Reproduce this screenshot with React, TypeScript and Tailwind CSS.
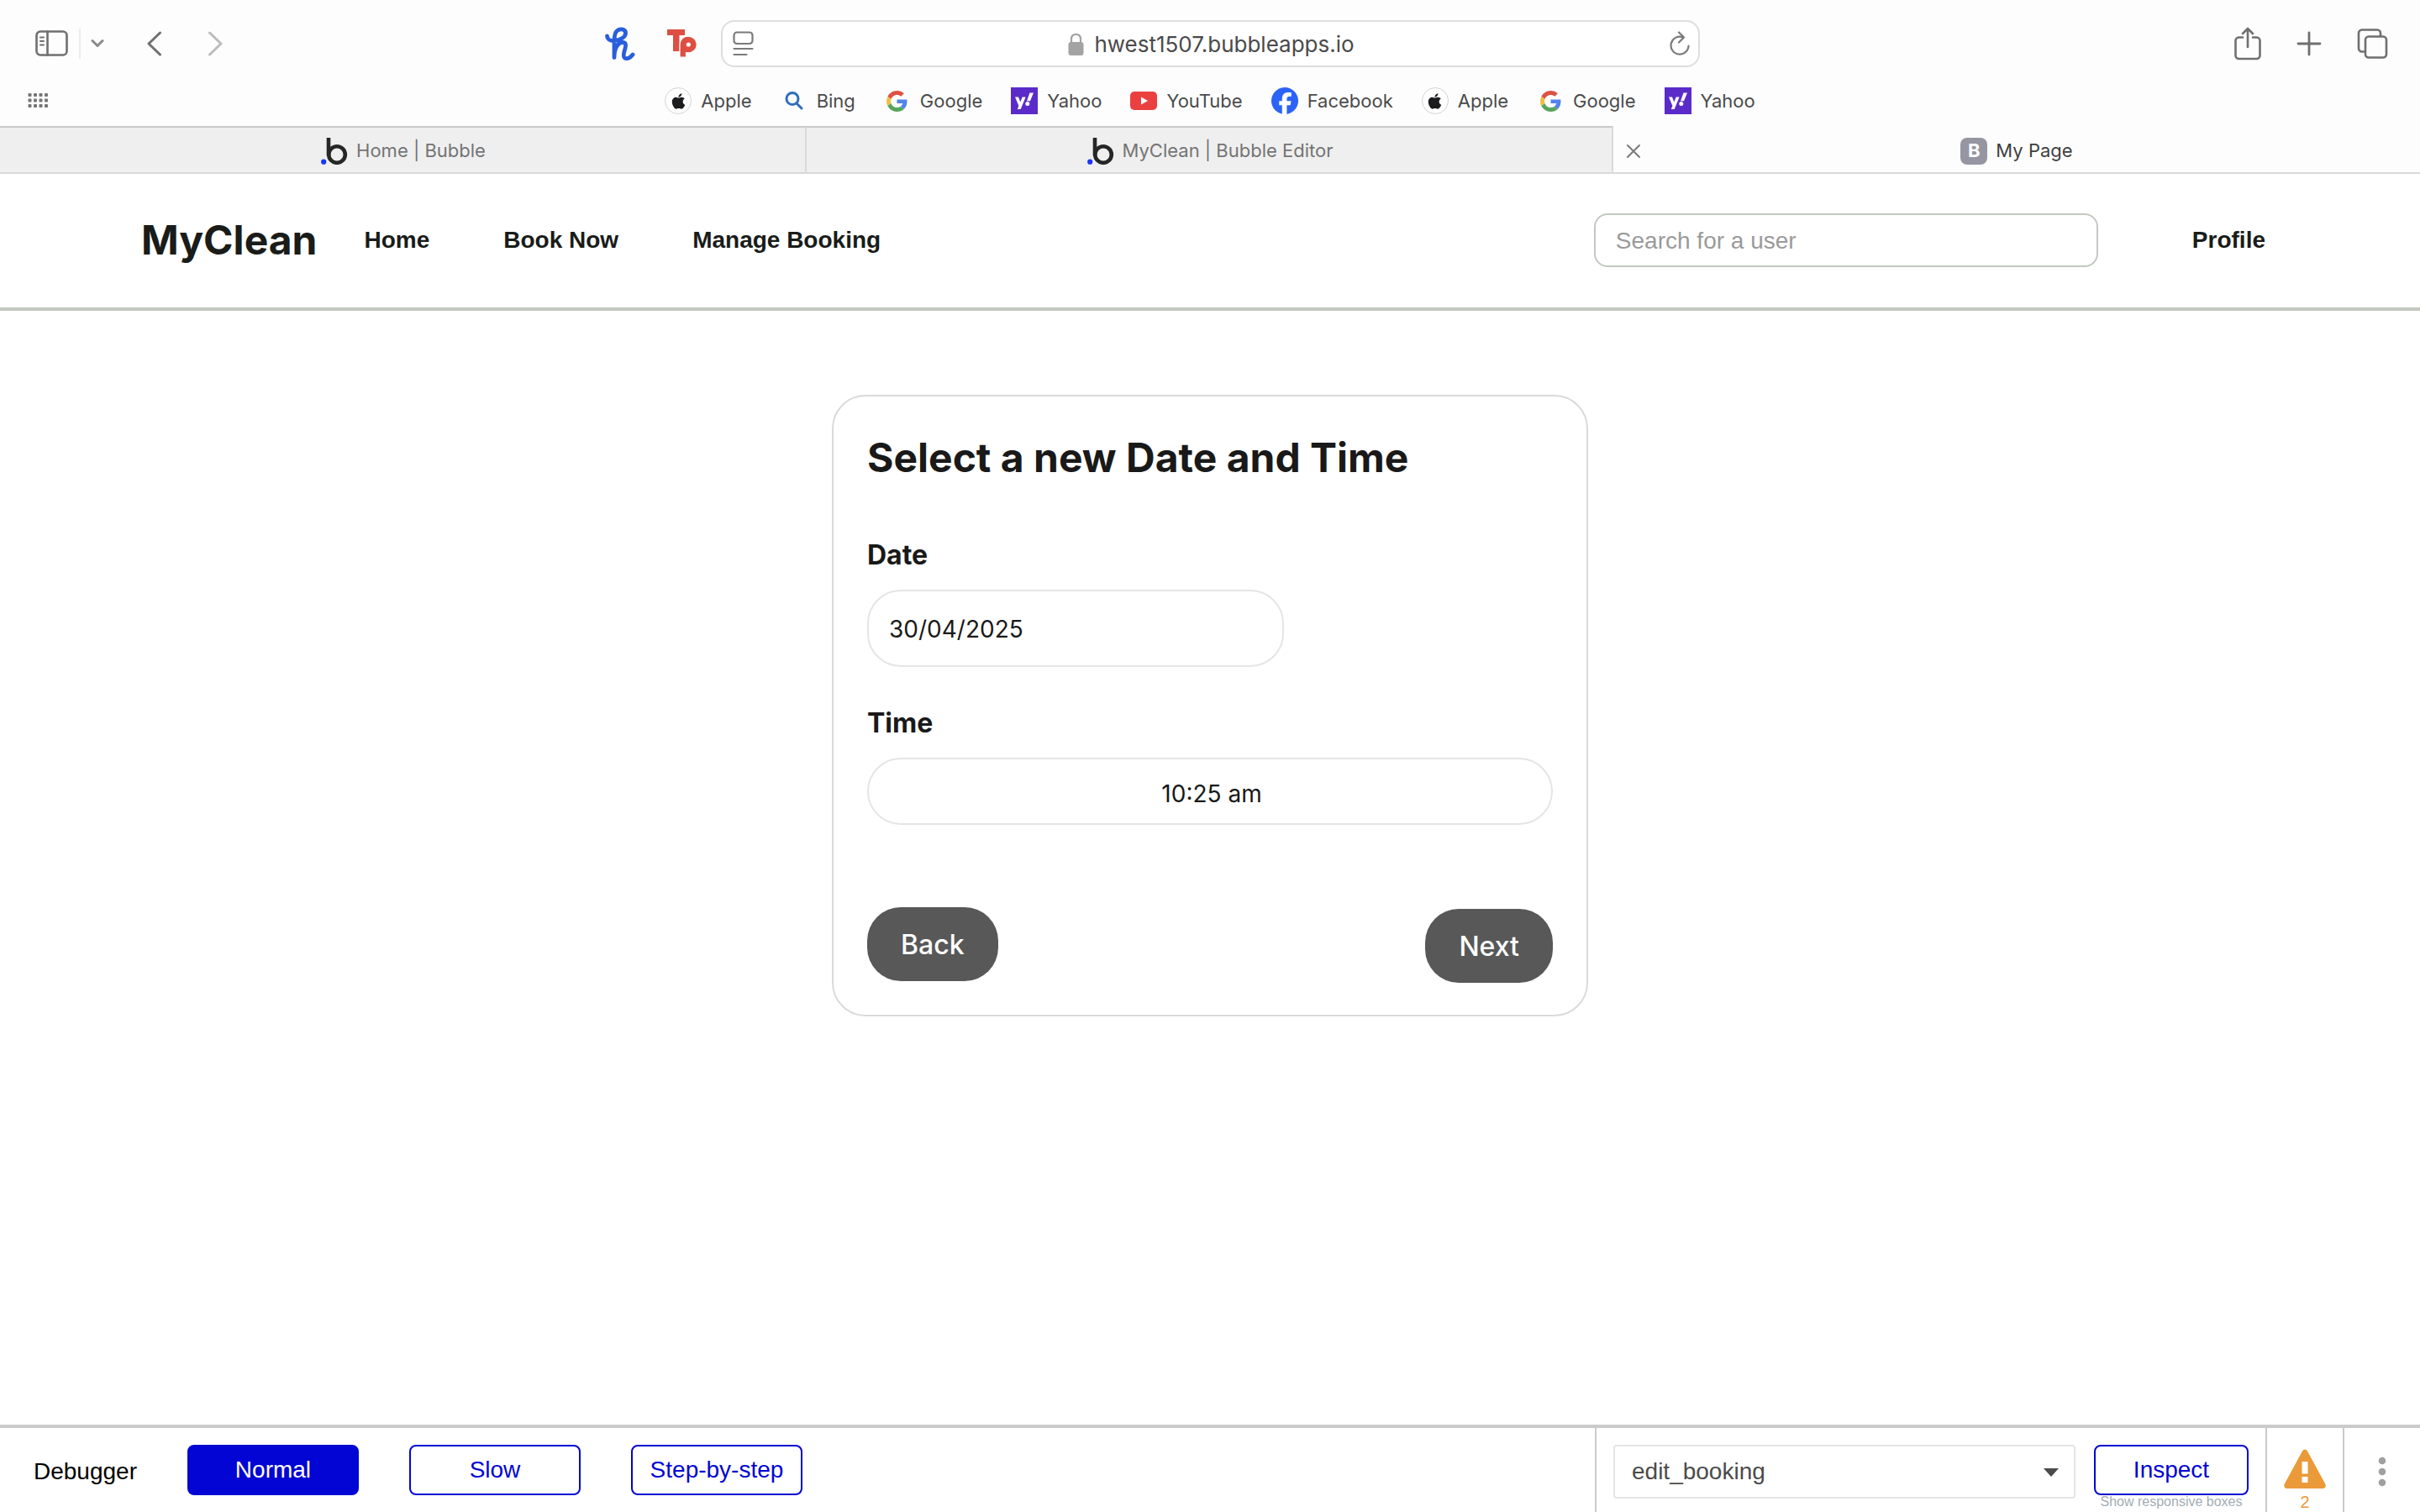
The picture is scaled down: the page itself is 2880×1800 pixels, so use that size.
import React from "react";
import { FaApple } from "react-icons/fa";

const inter = "font-['Inter',sans-serif]";
const helv = "font-['Liberation_Sans',Arial,sans-serif]";

function SidebarIcon() {
  return (
    <svg width="40" height="32" viewBox="0 0 40 32" fill="none" stroke="#6f6f6f" strokeWidth="2.6" strokeLinecap="round">
      <rect x="1.5" y="1.5" width="36" height="28" rx="4.5" />
      <path d="M14.5 1.5v28" />
      <path d="M6 8.500h4M6 13h4M6 17.500h4" strokeWidth="2" />
    </svg>
  );
}

function AppleBadge() {
  return (
    <span className="flex size-8 items-center justify-center rounded-full border border-[#d4d4d4] bg-white">
      <FaApple size={21} color="#1c1c1e" />
    </span>
  );
}

function BingIcon() {
  return (
    <svg width="22" height="22" viewBox="0 0 22 22" fill="none" stroke="#2f6dbd" strokeWidth="3" strokeLinecap="round">
      <circle cx="9" cy="8.500" r="7" />
      <path d="M14 14l6 6" />
    </svg>
  );
}

function GoogleIcon() {
  return (
    <svg width="25" height="25" viewBox="0 0 48 48">
      <path fill="#DE5145" d="M24 9.500c3.540 0 6.710 1.220 9.210 3.600l6.850-6.850C35.900 2.380 30.470 0 24 0 14.620 0 6.510 5.380 2.560 13.220l7.980 6.190C12.430 13.720 17.740 9.500 24 9.500z" />
      <path fill="#5383EC" d="M46.980 24.550c0-1.570-.15-3.090-.38-4.550H24v9.020h12.940c-.58 2.960-2.260 5.480-4.780 7.180l7.730 6c4.510-4.180 7.090-10.360 7.090-17.650z" />
      <path fill="#F1BE42" d="M10.530 28.590c-.48-1.450-.76-2.990-.76-4.590s.27-3.140.76-4.590l-7.980-6.190C.92 16.460 0 20.120 0 24c0 3.880.92 7.540 2.560 10.780l7.970-6.190z" />
      <path fill="#58A55C" d="M24 48c6.480 0 11.930-2.130 15.890-5.810l-7.730-6c-2.150 1.450-4.920 2.300-8.160 2.300-6.260 0-11.570-4.220-13.470-9.910l-7.980 6.190C6.510 42.620 14.620 48 24 48z" />
    </svg>
  );
}

function YahooIcon() {
  return (
    <svg width="32" height="32" viewBox="0 0 32 32">
      <path fill="#5a2bc9" d="M0 0h32v32H0z" />
      <path fill="#fff" d="M5 11.500h4l2.300 6 2.300-6h4L11.700 26H7.800l1.600-3.900zM22.500 6.500H27l-4 9.800h-4z" />
      <circle cx="19.800" cy="19.600" r="2.500" fill="#fff" />
    </svg>
  );
}

function YouTubeIcon() {
  return (
    <svg width="32" height="22" viewBox="0 0 32 22">
      <rect width="32" height="22" rx="5" fill="#ea4140" />
      <path fill="#fff" d="M13 6.500v9l8-4.500z" />
    </svg>
  );
}

function FacebookIcon() {
  return (
    <svg width="32" height="32" viewBox="0 0 32 32">
      <circle cx="16" cy="16" r="16" fill="#2b63f6" />
      <path fill="#fff" d="M12.800 32V21.200H9.300v-5h3.500v-2.400c0-5.400 2.500-7.900 7.700-7.900 1 0 2.600.2 3.300.4v4.500c-.4 0-1-.1-1.800-.1-2.600 0-3.600 1-3.600 3.500v2h5.100l-.9 5h-4.200V32z" />
    </svg>
  );
}

function BubbleIcon() {
  return (
    <svg width="32" height="32" viewBox="0 0 32 32" fill="none">
      <path d="M9 0v21" stroke="#262626" strokeWidth="4.600" />
      <circle cx="19" cy="20" r="9.800" stroke="#262626" strokeWidth="4.600" />
      <circle cx="3.200" cy="28.700" r="3.100" fill="#1a33ff" />
    </svg>
  );
}

const bookmarks: { label: string; icon: React.ReactNode }[] = [
  { label: "Apple", icon: <AppleBadge /> },
  { label: "Bing", icon: <BingIcon /> },
  { label: "Google", icon: <GoogleIcon /> },
  { label: "Yahoo", icon: <YahooIcon /> },
  { label: "YouTube", icon: <YouTubeIcon /> },
  { label: "Facebook", icon: <FacebookIcon /> },
  { label: "Apple", icon: <AppleBadge /> },
  { label: "Google", icon: <GoogleIcon /> },
  { label: "Yahoo", icon: <YahooIcon /> },
];

function Toolbar() {
  return (
    <div className="grid h-[104px] grid-cols-[1fr_1165px_1fr] items-center">
      <div className="flex items-center justify-between pr-7 pl-[42px]">
        <div className="flex items-center">
          <button aria-label="Toggle sidebar"><SidebarIcon /></button>
          <span className="ml-3 h-9 w-0.5 bg-[#ececec]" />
          <button aria-label="Tab groups" className="ml-3">
            <svg width="16" height="12" viewBox="0 0 16 12" fill="none" stroke="#8a8a8a" strokeWidth="3" strokeLinecap="round" strokeLinejoin="round"><path d="M2 2.500l6 6 6-6" /></svg>
          </button>
          <button aria-label="Back" className="ml-[50px]">
            <svg width="20" height="30" viewBox="0 0 20 30" fill="none" stroke="#6f6f6f" strokeWidth="3" strokeLinecap="round" strokeLinejoin="round"><path d="M16.500 2L3 15l13.500 13" /></svg>
          </button>
          <button aria-label="Forward" className="ml-[52px]">
            <svg width="20" height="30" viewBox="0 0 20 30" fill="none" stroke="#bcbcbc" strokeWidth="3" strokeLinecap="round" strokeLinejoin="round"><path d="M3.500 2L17 15 3.500 28" /></svg>
          </button>
        </div>
        <div className="flex items-center gap-[38px]">
          <button aria-label="Honey">
            <svg width="36" height="40" viewBox="0 -1 36 40" fill="none" stroke="#2a5fdc" strokeWidth="4.800" strokeLinecap="round" strokeLinejoin="round">
              <path d="M2.500 10C3 14 7 16 11 15.500 18 15 24.500 11 24.500 6.500 24.500 1 17 .5 13.500 4.500 11 7.500 11 12 11 17v18.500C11 25 15 17.500 21 17.500c4 0 4 3 3 7s-3 8.500-1 11c2.500 2.500 7 .5 10-3.500" />
            </svg>
          </button>
          <button aria-label="Tp">
            <svg width="36" height="36" viewBox="0 0 36 36">
              <path fill="#de4e43" d="M0 1h21v7h-6.500v19H7V8H0z" />
              <path fill="#de4e43" stroke="#fdfdfd" strokeWidth="1.200" d="M15 34V19c0-6 4.500-9.800 10-9.800 5.800 0 10.300 4.400 10.300 9.800s-4.500 9.800-10.300 9.800c-.8 0-1.600-.1-2.500-.3V34z" />
              <circle cx="25.300" cy="19" r="2.600" fill="#fdfdfd" />
            </svg>
          </button>
        </div>
      </div>
      <div className="flex h-14 items-center justify-between rounded-2xl border-2 border-[#dedede] bg-white pr-2.5 pl-3">
        <button aria-label="Page menu">
          <svg width="25" height="30" viewBox="0 0 25 30" fill="none" stroke="#7a7a7a" strokeWidth="2.200" strokeLinecap="round"><rect x="1.500" y="1.500" width="22" height="13.500" rx="3.500" /><path d="M1.500 21h22M1.500 28h15" /></svg>
        </button>
        <div className="flex items-center gap-3 pt-0.5 text-[26px] leading-8 text-[#4a4a4a]">
          <svg width="19" height="28" viewBox="0 0 19 28"><path d="M4 13V7.500C4 3.800 6 1.800 9.500 1.800S15 3.800 15 7.500V13" fill="none" stroke="#a3a3a3" strokeWidth="2.200" /><rect x="0.500" y="11" width="18" height="16" rx="3" fill="#a3a3a3" /></svg>
          <span>hwest1507.bubbleapps.io</span>
        </div>
        <button aria-label="Reload">
          <svg width="24" height="30" viewBox="0 0 24 30" fill="none" stroke="#7a7a7a" strokeWidth="2.200" strokeLinecap="round" strokeLinejoin="round"><path d="M22.500 17.500A10.500 10.500 0 1 1 15.500 7.200M11 1.500l6 6-6 6" /></svg>
        </button>
      </div>
      <div className="flex items-center justify-end gap-[42px] pr-[38px]">
        <button aria-label="Share">
          <svg width="32" height="40" viewBox="0 0 32 40" fill="none" stroke="#6f6f6f" strokeWidth="2.600" strokeLinecap="round" strokeLinejoin="round"><path d="M10 12.500H5.500a4 4 0 0 0-4 4V34a4 4 0 0 0 4 4h21a4 4 0 0 0 4-4V16.500a4 4 0 0 0-4-4H22M16 24V2M10 8l6-6 6 6" /></svg>
        </button>
        <button aria-label="New tab">
          <svg width="30" height="30" viewBox="0 0 30 30" fill="none" stroke="#6f6f6f" strokeWidth="2.800" strokeLinecap="round"><path d="M15 2v26M2 15h26" /></svg>
        </button>
        <button aria-label="Tab overview">
          <svg width="37" height="36" viewBox="0 0 37 36" fill="none" stroke="#6f6f6f" strokeWidth="2.600" strokeLinejoin="round"><rect x="10" y="9.500" width="25" height="25" rx="4" /><path d="M10 27.500H6a4 4 0 0 1-4-4v-18a4 4 0 0 1 4-4h18a4 4 0 0 1 4 4v4" /></svg>
        </button>
      </div>
    </div>
  );
}

function BookmarksBar() {
  return (
    <div className="grid h-[46px] grid-cols-[1fr_auto_1fr] items-start">
      <button aria-label="Show all bookmarks" className="ml-[33px] flex h-8 items-center justify-self-start">
        <svg width="26" height="18" viewBox="0 0 26 18" fill="#767676">
          {[0, 6.500, 13, 19.500].map((x) => [0, 6.500, 13].map((y) => <rect key={`${x}-${y}`} x={x + 0.500} y={y} width="4" height="4" rx="1" />))}
        </svg>
      </button>
      <nav aria-label="Bookmarks" className="flex items-center gap-[34px] text-[22px] leading-8 text-[#4a4a4a]">
        {bookmarks.map((b, i) => (
          <a key={i} href="#" className="flex h-8 items-center gap-[11px]">
            <span className="flex w-8 justify-center">{b.icon}</span>
            <span>{b.label}</span>
          </a>
        ))}
      </nav>
      <span />
    </div>
  );
}

function TabBar() {
  return (
    <div className="grid h-[57px] grid-cols-3 border-b-2 border-[#dadada] text-[22px] text-[#747474]">
      <button className="flex items-center justify-center gap-2.5 border-t-2 border-r-2 border-t-[#c9c9c9] border-r-[#dadada] bg-[#efefef] pt-0.5 pl-0.5">
        <BubbleIcon />
        <span>Home | Bubble</span>
      </button>
      <button className="flex items-center justify-center gap-2.5 border-t-2 border-r-2 border-t-[#c9c9c9] border-r-[#dadada] bg-[#efefef] pt-0.5 pl-0.5">
        <BubbleIcon />
        <span>MyClean | Bubble Editor</span>
      </button>
      <div className="grid grid-cols-[48px_1fr_48px] items-center pt-1">
        <button aria-label="Close tab" className="justify-self-center">
          <svg width="18" height="18" viewBox="0 0 18 18" fill="none" stroke="#7a7a7a" strokeWidth="2" strokeLinecap="round"><path d="M2 2l14 14M16 2L2 16" /></svg>
        </button>
        <button className="flex items-center justify-center gap-2.5 text-[#3f3f3f]">
          <span className="flex size-8 items-center justify-center rounded-lg bg-[#9696a2] font-bold text-white">B</span>
          <span>My Page</span>
        </button>
      </div>
    </div>
  );
}

function SiteHeader() {
  return (
    <header className={`flex items-center justify-between border-b-4 border-[#c2c8c0] pr-[184px] pb-0.5 pl-[168px] ${helv} h-[163px] text-[#191c19]`}>
      <div className="flex items-center">
        <a href="#" className={`${inter} text-5xl font-bold`}>MyClean</a>
        <nav className="ml-14 flex gap-[88px] text-[28px] leading-8 font-bold">
          <a href="#">Home</a>
          <a href="#">Book Now</a>
          <a href="#">Manage Booking</a>
        </nav>
      </div>
      <div className="flex items-center gap-28">
        <input
          aria-label="Search for a user"
          placeholder="Search for a user"
          className="h-16 w-[600px] rounded-2xl border-2 border-[#c2c8c0] px-6 pt-0.5 text-[28px] placeholder:text-[#9a9a9a]"
        />
        <a href="#" className="text-[28px] leading-8 font-bold">Profile</a>
      </div>
    </header>
  );
}

function BookingCard() {
  const field = "rounded-[40px] border-2 border-[#e5e5e5] bg-white text-[28px]";
  const action = "h-[88px] rounded-[40px] bg-[#585858] px-10 pt-0.5 text-[32px] font-medium text-white";
  return (
    <form className="w-[900px] rounded-[40px] border-2 border-[#dadada] bg-white px-10 pt-[43px] pb-[38px] text-[#191919]">
      <h1 className="text-5xl leading-[60px] font-bold">Select a new Date and Time</h1>
      <label htmlFor="date" className="mt-[66px] block text-[32px] leading-10 font-bold">Date</label>
      <input id="date" defaultValue="30/04/2025" className={`mt-[21px] block h-[92px] w-[496px] px-6 pt-0.5 ${field}`} />
      <label htmlFor="time" className="mt-[47px] block text-[32px] leading-10 font-bold">Time</label>
      <input id="time" defaultValue="10:25 am" className={`mt-[21px] block h-20 w-full pt-1.5 pr-5 pl-6 text-center ${field}`} />
      <div className="mt-[98px] flex items-start justify-between">
        <button type="button" className={action}>Back</button>
        <button type="button" className={`mt-0.5 ${action}`}>Next</button>
      </div>
    </form>
  );
}

function Debugger() {
  const outline = "h-[60px] rounded-lg border-2 border-[#0205d3]";
  return (
    <footer className={`flex h-[104px] border-t-4 border-[#cbcbcb] bg-white ${helv} text-[28px] leading-8`}>
      <div className="flex flex-1 items-start gap-[60px] pt-5 pl-10">
        <span className="flex h-16 items-center text-black">Debugger</span>
        <button className={`w-[204px] ${outline} bg-[#0205d3] text-white`}>Normal</button>
        <button className={`w-[204px] ${outline} text-[#0205d3]`}>Slow</button>
        <button className={`w-[204px] ${outline} text-[#0205d3]`}>Step-by-step</button>
      </div>
      <div className="flex items-start gap-[22px] border-l-2 border-[#cbcbcb] pt-5 pr-5 pl-5">
        <div className="relative">
          <select aria-label="Element" className="h-16 w-[550px] appearance-none rounded border-2 border-[#e5e5e5] bg-white pl-5 text-[#4b4b4b]">
            <option>edit_booking</option>
          </select>
          <svg className="pointer-events-none absolute top-7 right-5" width="18" height="10" viewBox="0 0 18 10"><path fill="#4b4b4b" d="M0 0h18L9 10z" /></svg>
        </div>
        <div className="flex flex-col items-center">
          <button className={`w-[184px] ${outline} text-[#0205d3]`}>Inspect</button>
          <a href="#" className="text-base leading-4 text-[#a3adb3]">Show responsive boxes</a>
        </div>
      </div>
      <div className="flex w-[92px] items-start justify-center border-l-2 border-[#cbcbcb] pt-[25px]">
        <button aria-label="2 issues" className="flex flex-col items-center text-xl leading-8 text-[#ea9a38]">
          <svg width="50" height="47" viewBox="0 0 50 47"><path fill="#ea9a38" d="M22 2.500c1.400-2.800 4.600-2.800 6 0l21.200 39c1.300 2.800.2 5.500-3 5.500H3.800c-3.200 0-4.300-2.700-3-5.500z" /><path fill="#fff" d="M21.500 15h7v14.500h-7zM21.500 33h7v7h-7z" /></svg>
          <span>2</span>
        </button>
      </div>
      <div className="flex w-[92px] items-start justify-center border-l-2 border-[#cbcbcb] pt-[34px]">
        <button aria-label="More">
          <svg width="10" height="36" viewBox="0 0 10 36" fill="#a0a0a0"><circle cx="5" cy="5" r="4.300" /><circle cx="5" cy="18" r="4.300" /><circle cx="5" cy="31" r="4.300" /></svg>
        </button>
      </div>
    </footer>
  );
}

export default function App() {
  return (
    <div className={`flex min-h-screen flex-col bg-white ${inter}`}>
      <div className="bg-[#fdfdfd]">
        <Toolbar />
        <BookmarksBar />
        <TabBar />
      </div>
      <SiteHeader />
      <main className="flex flex-1 items-start justify-center pt-[100px]">
        <BookingCard />
      </main>
      <Debugger />
    </div>
  );
}
